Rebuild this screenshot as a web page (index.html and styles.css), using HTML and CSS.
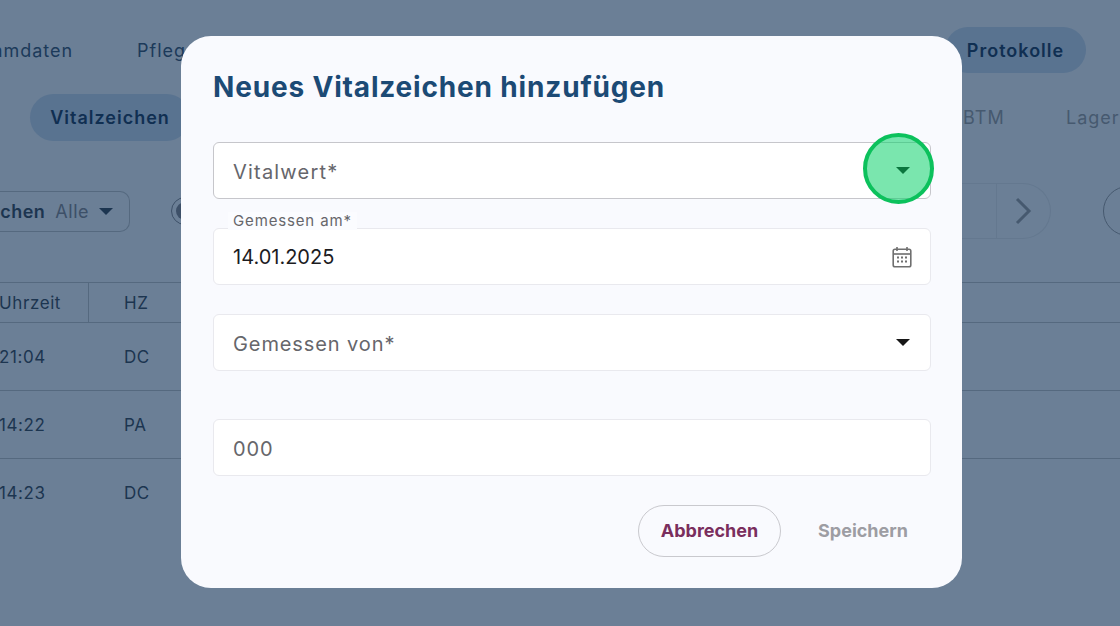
FILE: index.html
```html
<!DOCTYPE html>
<html lang="de">
<head>
    <meta charset="UTF-8">
    <title>Protokolle</title>
    <link rel="stylesheet" href="styles.css">
</head>
<body>
    <div class="page">
        <nav class="main-nav">
            <span class="nav-item nav-stamm">Stammdaten</span>
            <span class="nav-item nav-pflege">Pflege</span>
            <span class="nav-item nav-active">Protokolle</span>
        </nav>
        <nav class="sub-nav">
            <span class="sub-item sub-active">Vitalzeichen</span>
            <span class="sub-item sub-btm">BTM</span>
            <span class="sub-item sub-lager">Lager</span>
        </nav>
        <div class="toolbar">
            <div class="filter">
                <strong>Vitalzeichen</strong>
                <span class="filter-value">Alle</span>
                <span class="caret caret-bg"></span>
            </div>
            <span class="radio"><span class="radio-dot"></span></span>
            <div class="pager">
                <span class="pager-next">
                    <svg width="18" height="28" viewBox="0 0 18 28"><path d="M3 2l12 12L3 26" fill="none" stroke="#46596f" stroke-width="3"/></svg>
                </span>
            </div>
            <span class="round-btn"></span>
        </div>
        <div class="table">
            <div class="row row-head">
                <span class="cell-time cell-divider">Uhrzeit</span>
                <span class="cell-code">HZ</span>
            </div>
            <div class="row">
                <span class="cell-time">21:04</span>
                <span class="cell-code">DC</span>
            </div>
            <div class="row">
                <span class="cell-time">14:22</span>
                <span class="cell-code">PA</span>
            </div>
            <div class="row">
                <span class="cell-time">14:23</span>
                <span class="cell-code">DC</span>
            </div>
        </div>
    </div>

    <div class="modal">
        <h2>Neues Vitalzeichen hinzufügen</h2>
        <div class="field field-outlined">
            <span class="placeholder">Vitalwert*</span>
            <span class="caret"></span>
            <span class="highlight"></span>
        </div>
        <div class="field field-date">
            <label class="float-label">Gemessen am*</label>
            <span class="value">14.01.2025</span>
            <svg class="calendar" width="20" height="22" viewBox="0 0 20 22">
                <path d="M5 1v4M15 1v4" stroke="#6f6f6f" stroke-width="1.6" fill="none"/>
                <rect x="1.2" y="3.2" width="17.6" height="17.6" rx="1.8" fill="none" stroke="#6f6f6f" stroke-width="1.6"/>
                <path d="M1.2 8h17.6" stroke="#6f6f6f" stroke-width="1.6"/>
                <path d="M5 11.5h2M9 11.5h2M13 11.5h2M5 15.5h2M9 15.5h2M13 15.5h2" stroke="#6f6f6f" stroke-width="1.8"/>
            </svg>
        </div>
        <div class="field field-von">
            <span class="placeholder">Gemessen von*</span>
            <span class="caret"></span>
        </div>
        <div class="field field-num">
            <span class="placeholder">000</span>
        </div>
        <div class="actions">
            <button class="btn-cancel">Abbrechen</button>
            <button class="btn-save">Speichern</button>
        </div>
    </div>
</body>
</html>
```

FILE: styles.css
```css
html, body {
    margin: 0;
    padding: 0;
    height: 100%;
    overflow: hidden;
    background-color: #6b7f96;
    font-family: 'Inter', 'Liberation Sans', sans-serif;
}

.page {
    height: 626px;
    overflow: hidden;
    color: #1c3550;
}

.main-nav {
    display: flex;
    align-items: center;
    height: 46px;
    padding-top: 27px;
    font-size: 18px;
    letter-spacing: 1px;
    color: #1c3a5a;
}

.nav-stamm {
    flex-shrink: 0;
    margin-left: -44px;
    width: 181px;
    white-space: nowrap;
}

.nav-pflege {
    flex-shrink: 0;
    width: 808px;
}

.nav-active {
    display: flex;
    align-items: center;
    justify-content: center;
    flex-shrink: 0;
    width: 141px;
    height: 46px;
    border-radius: 23px;
    background-color: #597390;
    font-weight: 600;
    color: #102f52;
}

.sub-nav {
    display: flex;
    align-items: center;
    height: 47px;
    margin-top: 21px;
    padding-left: 30px;
    font-size: 18px;
    letter-spacing: 1px;
}

.sub-active {
    display: flex;
    align-items: center;
    justify-content: center;
    flex-shrink: 0;
    width: 160px;
    height: 47px;
    border-radius: 24px;
    background-color: #597390;
    font-weight: 600;
    color: #102f52;
}

.sub-btm {
    flex-shrink: 0;
    margin-left: 773px;
    width: 103px;
    color: #46596f;
}

.sub-lager {
    flex-shrink: 0;
    color: #46596f;
}

.toolbar {
    display: flex;
    align-items: center;
    height: 56px;
    margin-top: 42px;
}

.filter {
    display: flex;
    align-items: center;
    gap: 10px;
    justify-content: flex-end;
    flex-shrink: 0;
    box-sizing: border-box;
    width: 130px;
    height: 41px;
    padding-right: 16px;
    border: 1px solid #55697f;
    border-left: none;
    border-radius: 0 10px 10px 0;
    font-size: 18px;
    letter-spacing: 0.5px;
    white-space: nowrap;
    overflow: hidden;
}

.filter strong {
    font-weight: 600;
}

.filter-value {
    color: #3d5068;
}

.caret {
    display: inline-block;
    width: 0;
    height: 0;
    border-left: 7px solid transparent;
    border-right: 7px solid transparent;
    border-top: 7px solid #161616;
}

.caret-bg {
    flex-shrink: 0;
    border-top-color: #1c3550;
}

.radio {
    display: flex;
    align-items: center;
    justify-content: center;
    flex-shrink: 0;
    box-sizing: border-box;
    width: 28px;
    height: 28px;
    margin-left: 41px;
    border: 1px solid #3d5068;
    border-radius: 50%;
}

.radio-dot {
    width: 18px;
    height: 18px;
    border-radius: 50%;
    background-color: #3d5068;
}

.pager {
    display: flex;
    align-items: center;
    flex-shrink: 0;
    box-sizing: border-box;
    width: 200px;
    height: 56px;
    margin-left: 652px;
    justify-content: flex-end;
    border: 1px solid #64788f;
    border-left: none;
    border-radius: 0 28px 28px 0;
}

.pager-next {
    display: flex;
    align-items: center;
    justify-content: center;
    box-sizing: border-box;
    width: 54px;
    height: 100%;
    border-left: 1px solid #64788f;
    padding-right: 2px;
}

.round-btn {
    box-sizing: border-box;
    width: 50px;
    height: 50px;
    margin-left: 52px;
    flex-shrink: 0;
    border: 1px solid #46596f;
    border-radius: 50%;
}

.table {
    margin-top: 43px;
    border-top: 1px solid #55697f;
    font-size: 17px;
    letter-spacing: 0.6px;
}

.row {
    display: flex;
    align-items: center;
    height: 67px;
    border-bottom: 1px solid #55697f;
}

.row:last-child {
    border-bottom: none;
}

.row-head {
    height: 39px;
}

.cell-time {
    display: flex;
    align-items: center;
    box-sizing: border-box;
    width: 90px;
    height: 100%;
    margin-left: -1px;
}

.cell-divider {
    border-right: 1px solid #55697f;
}

.cell-code {
    margin-left: 35px;
}

.modal {
    position: fixed;
    left: 181px;
    top: 36px;
    box-sizing: border-box;
    width: 781px;
    height: 552px;
    padding: 33px 31px 0 32px;
    border-radius: 30px;
    background-color: #f9fafe;
}

.modal h2 {
    margin: 0 0 37px;
    height: 36px;
    font-size: 28px;
    line-height: 36px;
    font-weight: 700;
    letter-spacing: 0.83px;
    color: #1c4a75;
}

.field {
    position: relative;
    display: flex;
    align-items: center;
    justify-content: space-between;
    box-sizing: border-box;
    height: 57px;
    padding: 0 20px 0 19px;
    border: 1px solid #e9e9ee;
    border-radius: 6px;
    background-color: #fff;
    font-size: 20px;
}

.field-outlined {
    border-color: #c6c6cb;
}

.field-date {
    margin-top: 29px;
}

.field-von {
    margin-top: 29px;
}

.field-num {
    margin-top: 48px;
}

.placeholder {
    padding-top: 2px;
    color: #66666b;
    letter-spacing: 0.9px;
}

.field-outlined .placeholder {
    letter-spacing: 1.2px;
}

.value {
    color: #1c1c1f;
}

.float-label {
    position: absolute;
    left: 14px;
    top: -17px;
    height: 18px;
    padding: 0 5px;
    font-size: 15px;
    line-height: 18px;
    letter-spacing: 0.85px;
    color: #66666b;
    background-color: #fbfcff;
}

.calendar {
    margin-right: -2px;
}

.highlight {
    position: absolute;
    left: 649px;
    top: -10px;
    box-sizing: border-box;
    width: 71px;
    height: 71px;
    border: 4px solid #0cc15c;
    border-radius: 50%;
    background-color: rgba(0, 208, 100, 0.52);
}

.actions {
    display: flex;
    align-items: center;
    margin-top: 29px;
}

.btn-cancel, .btn-save {
    padding: 0 0 2px;
    font-family: inherit;
    font-size: 18px;
    font-weight: 700;
    background: none;
}

.btn-cancel {
    box-sizing: border-box;
    width: 143px;
    height: 52px;
    margin-left: 425px;
    border: 1px solid #c9c9ce;
    border-radius: 26px;
    color: #7a2e5d;
}

.btn-save {
    width: 90px;
    margin-left: 37px;
    border: none;
    color: #9d9da3;
    white-space: nowrap;
}
```
